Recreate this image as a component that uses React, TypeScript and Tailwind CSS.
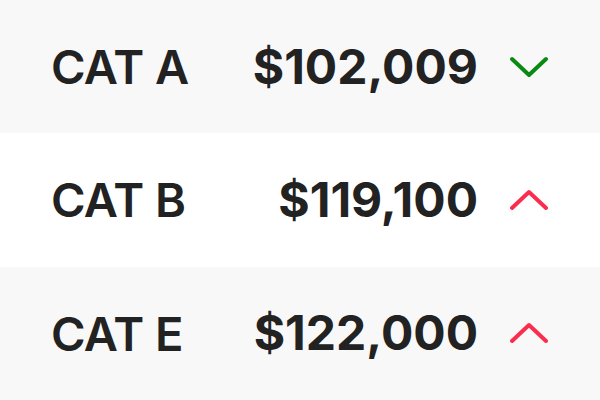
import React from "react";

interface Row {
  label: string;
  value: string;
  trend: "up" | "down";
  shaded: boolean;
}

const rows: Row[] = [
  { label: "CAT A", value: "$102,009", trend: "down", shaded: true },
  { label: "CAT B", value: "$119,100", trend: "up", shaded: false },
  { label: "CAT E", value: "$122,000", trend: "up", shaded: true },
];

const Chevron = ({ trend }: { trend: "up" | "down" }) => (
  <svg width="38" height="22" viewBox="0 0 38 22" fill="none">
    <path
      d={trend === "down" ? "M2 3 L19 19 L36 3" : "M2 19 L19 3 L36 19"}
      stroke={trend === "down" ? "#0b8a12" : "#fb2d4f"}
      strokeWidth="4"
      strokeLinecap="round"
      strokeLinejoin="round"
    />
  </svg>
);

export default function App() {
  return (
    <div
      className="flex h-[400px] w-[600px] flex-col bg-white text-[#222222]"
      style={{ fontFamily: "Inter, 'Liberation Sans', sans-serif" }}
    >
      {rows.map((row) => (
        <div
          key={row.label}
          className={`flex flex-1 items-center pl-[51px] pr-[52px] ${
            row.shaded ? "bg-[#f8f8f8]" : "bg-white"
          }`}
        >
          <span className="flex-1 text-[47px] font-semibold leading-none tracking-[-0.6px]">
            {row.label}
          </span>
          <span className="text-[48px] font-bold leading-none">
            {row.value}
          </span>
          <span className="ml-[32px] flex w-[38px] items-center justify-center">
            <Chevron trend={row.trend} />
          </span>
        </div>
      ))}
    </div>
  );
}
